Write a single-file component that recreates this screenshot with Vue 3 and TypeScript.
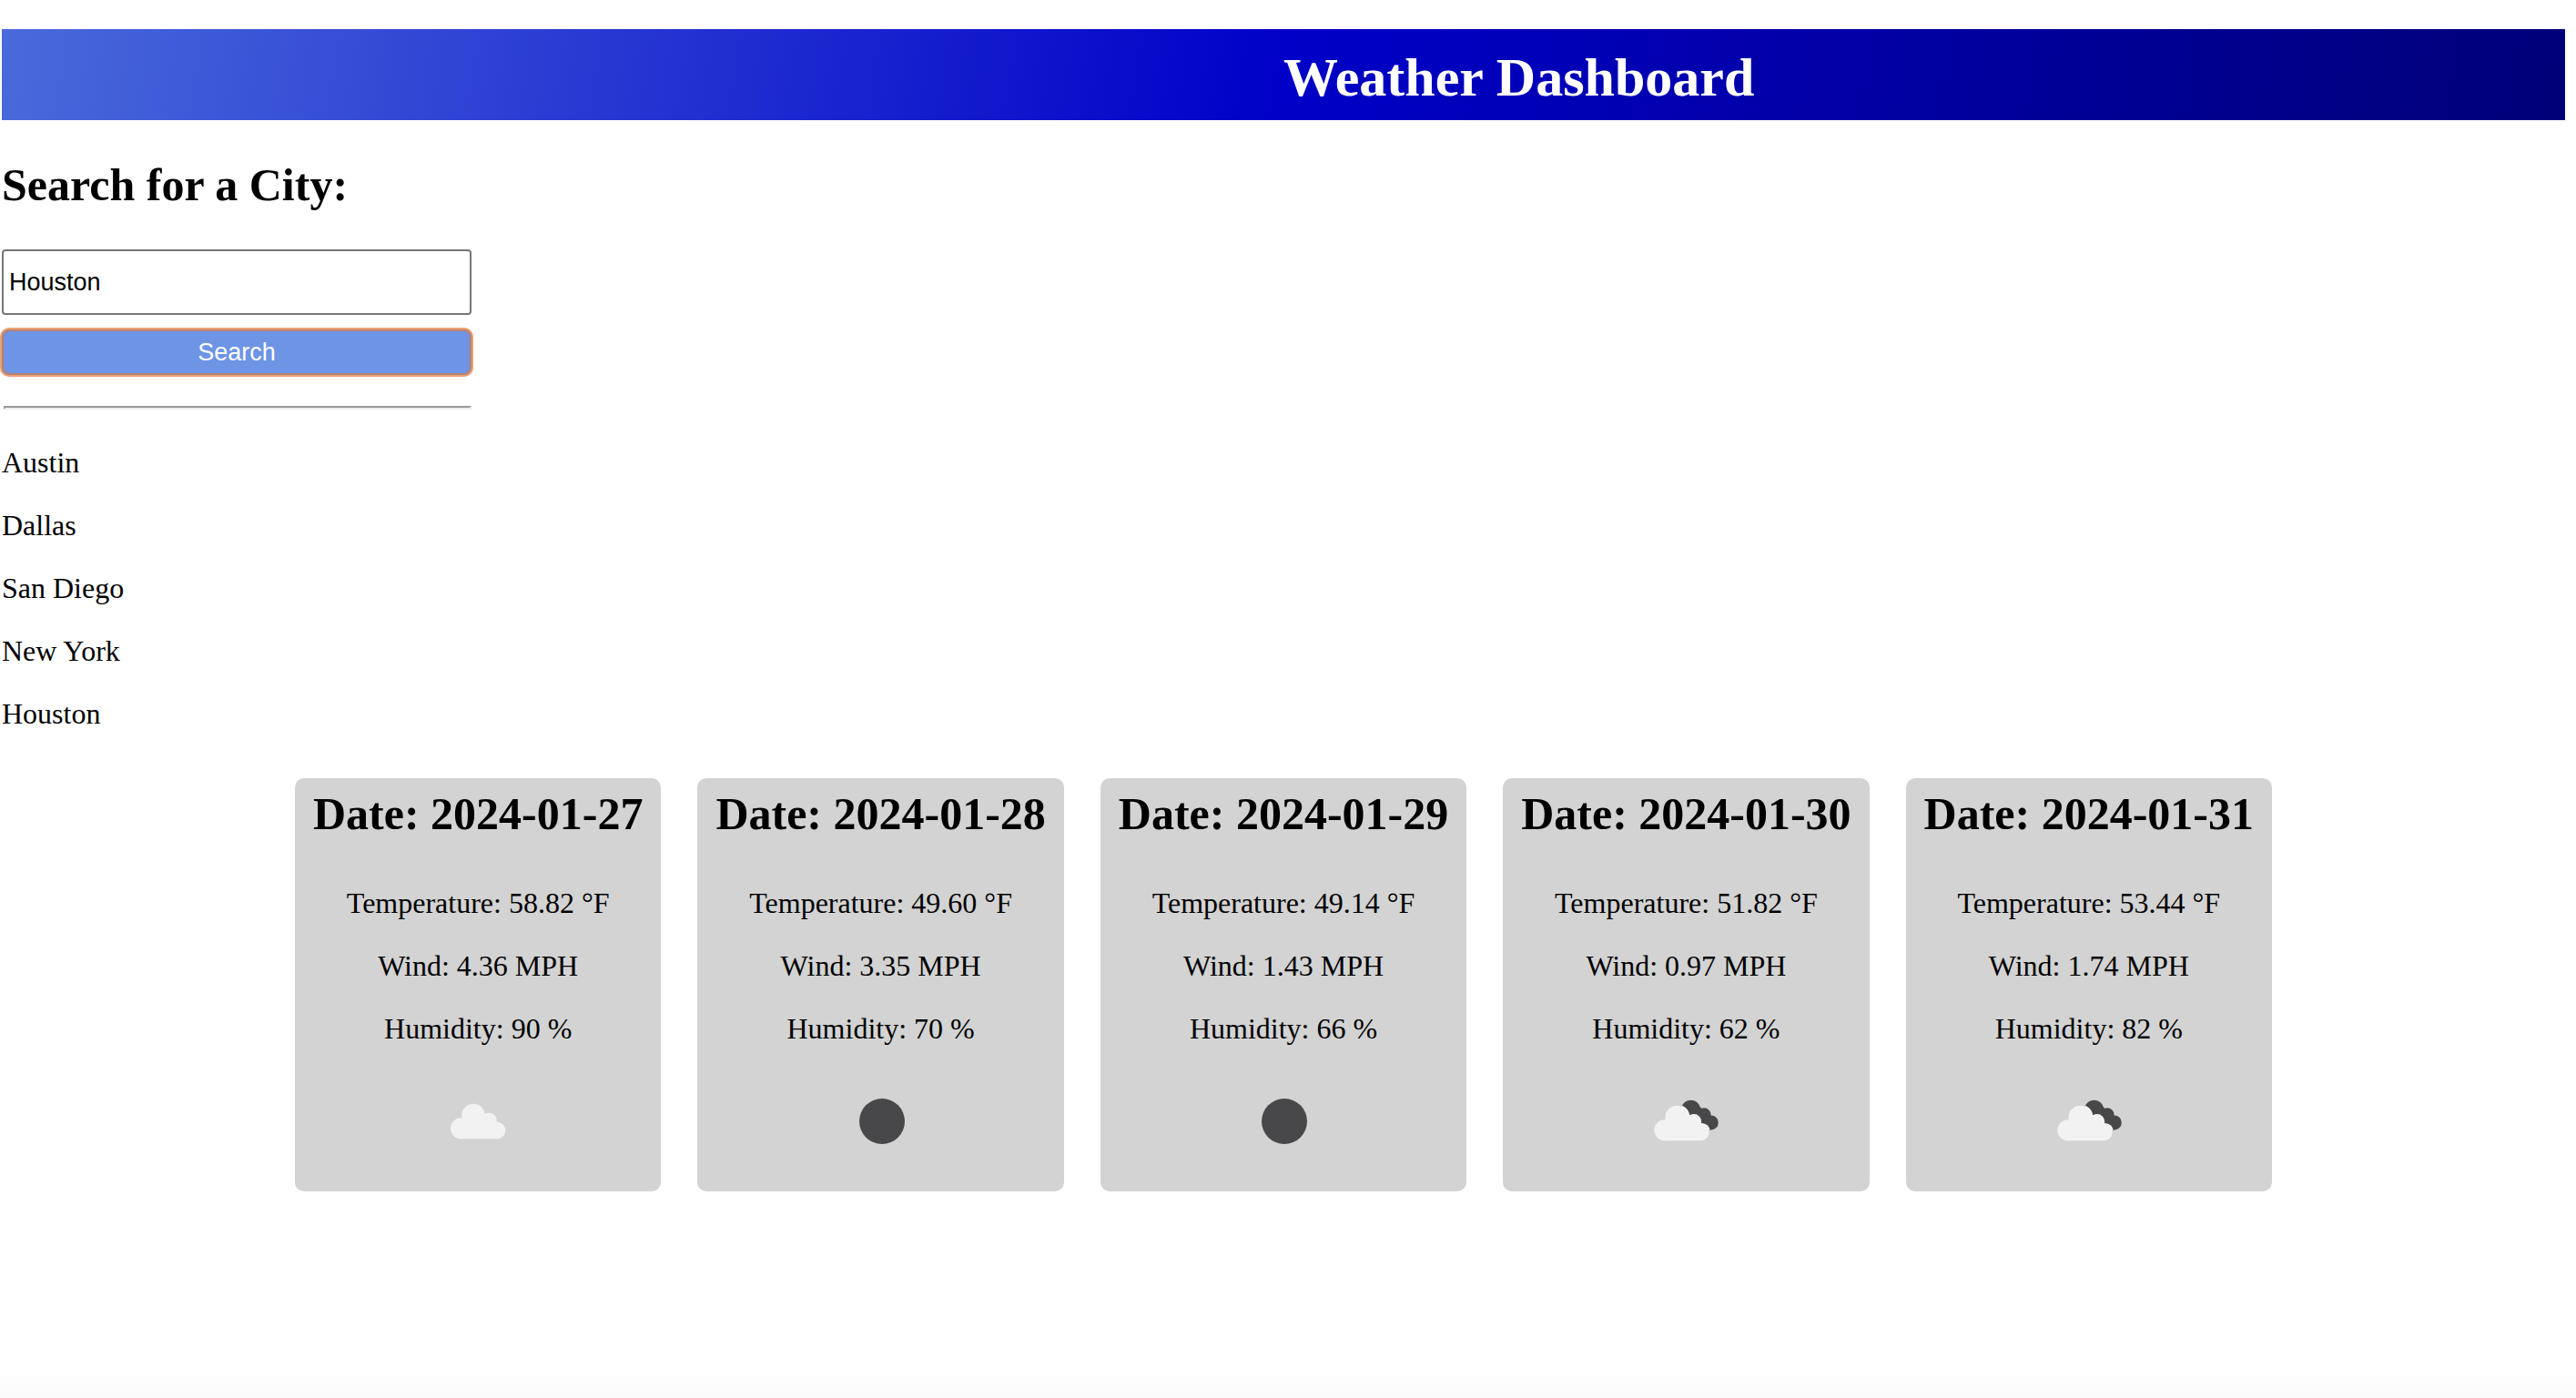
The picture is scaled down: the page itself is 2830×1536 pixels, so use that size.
<script setup lang="ts">
import { ref } from 'vue'

type Sky = 'cloudy' | 'clear' | 'broken'

interface Forecast {
  date: string
  temperature: string
  wind: string
  humidity: number
  sky: Sky
}

const city = ref('Houston')
const history = ref<string[]>(['Austin', 'Dallas', 'San Diego', 'New York', 'Houston'])

const forecasts: Forecast[] = [
  { date: '2024-01-27', temperature: '58.82', wind: '4.36', humidity: 90, sky: 'cloudy' },
  { date: '2024-01-28', temperature: '49.60', wind: '3.35', humidity: 70, sky: 'clear' },
  { date: '2024-01-29', temperature: '49.14', wind: '1.43', humidity: 66, sky: 'clear' },
  { date: '2024-01-30', temperature: '51.82', wind: '0.97', humidity: 62, sky: 'broken' },
  { date: '2024-01-31', temperature: '53.44', wind: '1.74', humidity: 82, sky: 'broken' },
]

function search() {
  const name = city.value.trim()
  if (name && !history.value.includes(name)) history.value.push(name)
}
</script>

<template>
  <div class="page">
    <header class="banner">
      <h1>Weather Dashboard</h1>
    </header>

    <main>
      <section class="sidebar">
        <form @submit.prevent="search">
          <h2><label for="city">Search for a City:</label></h2>
          <input id="city" v-model="city" type="text" autocomplete="off" />
          <button type="submit">Search</button>
        </form>
        <hr />
        <div class="history">
          <p v-for="name in history" :key="name">{{ name }}</p>
        </div>
      </section>

      <section class="forecast">
        <article v-for="day in forecasts" :key="day.date" class="card">
          <h2>Date: {{ day.date }}</h2>
          <p>Temperature: {{ day.temperature }} °F</p>
          <p>Wind: {{ day.wind }} MPH</p>
          <p>Humidity: {{ day.humidity }} %</p>
          <svg class="sky" viewBox="0 0 100 100" aria-hidden="true">
            <circle v-if="day.sky === 'clear'" cx="51" cy="50" r="25" fill="#48484a" />
            <g v-else-if="day.sky === 'cloudy'" fill="#f2f2f2">
              <circle cx="45" cy="43.5" r="12.8" />
              <circle cx="31.5" cy="57.8" r="11.5" />
              <circle cx="62.5" cy="49" r="8.2" />
              <circle cx="71" cy="60" r="9.3" />
              <path d="M31.5 69.3H71L72 51L70.2 50.5L57.5 42.5L45 40L32.5 46.5L31 50Z" />
            </g>
            <template v-else>
              <clipPath :id="`back-${day.date}`">
                <circle cx="55.6" cy="37.3" r="10.6" />
                <circle cx="70" cy="42.8" r="7.6" />
                <circle cx="77.8" cy="51.4" r="8" />
                <path d="M47 43L60 29L66.5 35L77.3 43L78 59.4H60Z" />
              </clipPath>
              <g :clip-path="`url(#back-${day.date})`">
                <path d="M40 20H90V70H40Z" fill="#48484a" />
                <g fill="#fcfcfc" transform="translate(-3.6 1.2)">
                  <circle cx="45" cy="43.5" r="12.8" />
                  <circle cx="62.5" cy="49" r="8.2" />
                  <circle cx="71" cy="60" r="9.3" />
                </g>
              </g>
              <g fill="#f2f2f2" transform="translate(-4.7 2)">
                <circle cx="45" cy="43.5" r="12.8" />
                <circle cx="31.5" cy="57.8" r="11.5" />
                <circle cx="62.5" cy="49" r="8.2" />
                <circle cx="71" cy="60" r="9.3" />
                <path d="M31.5 69.3H71L72 51L70.2 50.5L57.5 42.5L45 40L32.5 46.5L31 50Z" />
              </g>
            </template>
          </svg>
        </article>
      </section>
    </main>

    <footer class="edge"></footer>
  </div>
</template>

<style>
body {
  margin: 0;
  background: #fff;
}
</style>

<style scoped>
.page {
  display: flex;
  flex-direction: column;
  min-height: 100vh;
  box-sizing: border-box;
  padding-top: 32px;
  color: #000;
  font-family: "Liberation Serif", "Times New Roman", serif;
  font-size: 32px;
  line-height: 37px;
}

h1,
h2,
p {
  margin: 0;
}

h1 {
  padding: 18px 0 12px 50%;
  font-size: 60px;
  line-height: 70px;
}

h2 {
  font-size: 50px;
  line-height: 58px;
}

.banner {
  margin: 0 12px 0 2px;
  color: #fff;
  background: linear-gradient(100deg, #4a6adb, #0000c8, #000078);
}

main {
  flex: 1;
  margin: 0 12px 0 2px;
}

.sidebar {
  width: 516px;
  max-width: 100%;
}

form {
  display: flex;
  flex-direction: column;
  padding-top: 42px;
}

input {
  box-sizing: border-box;
  height: 72px;
  margin: 42px 0 16px;
  padding: 0 6px;
  border: 2px solid #767676;
  border-radius: 4px;
  background: #fff;
  color: #000;
  font: 27px "Liberation Sans", Arial, sans-serif;
}

button {
  height: 50px;
  padding: 0;
  border: 2px solid #b88070;
  border-radius: 8px;
  box-shadow: 0 0 0 2px #e8a276;
  background: #6e94e6;
  color: #fff;
  font: 27px "Liberation Sans", Arial, sans-serif;
}

hr {
  margin: 34px 0 40px 2px;
  border: 2px solid;
  border-color: #9a9a9a #eee #eee #9a9a9a;
}

.history {
  display: flex;
  flex-direction: column;
  gap: 32px;
}

.forecast {
  display: flex;
  justify-content: center;
  gap: 40px;
  margin-top: 52px;
}

.card {
  display: flex;
  flex-direction: column;
  align-items: center;
  gap: 32px;
  padding: 10px 20px 27px;
  border-radius: 10px;
  background: #d3d3d3;
  white-space: nowrap;
}

.card h2 {
  margin-bottom: 19px;
}

.sky {
  width: 100px;
  height: 100px;
  margin-top: 1px;
}

.edge {
  height: 28px;
  background: linear-gradient(#fefefe, #fbfbfb);
}
</style>
